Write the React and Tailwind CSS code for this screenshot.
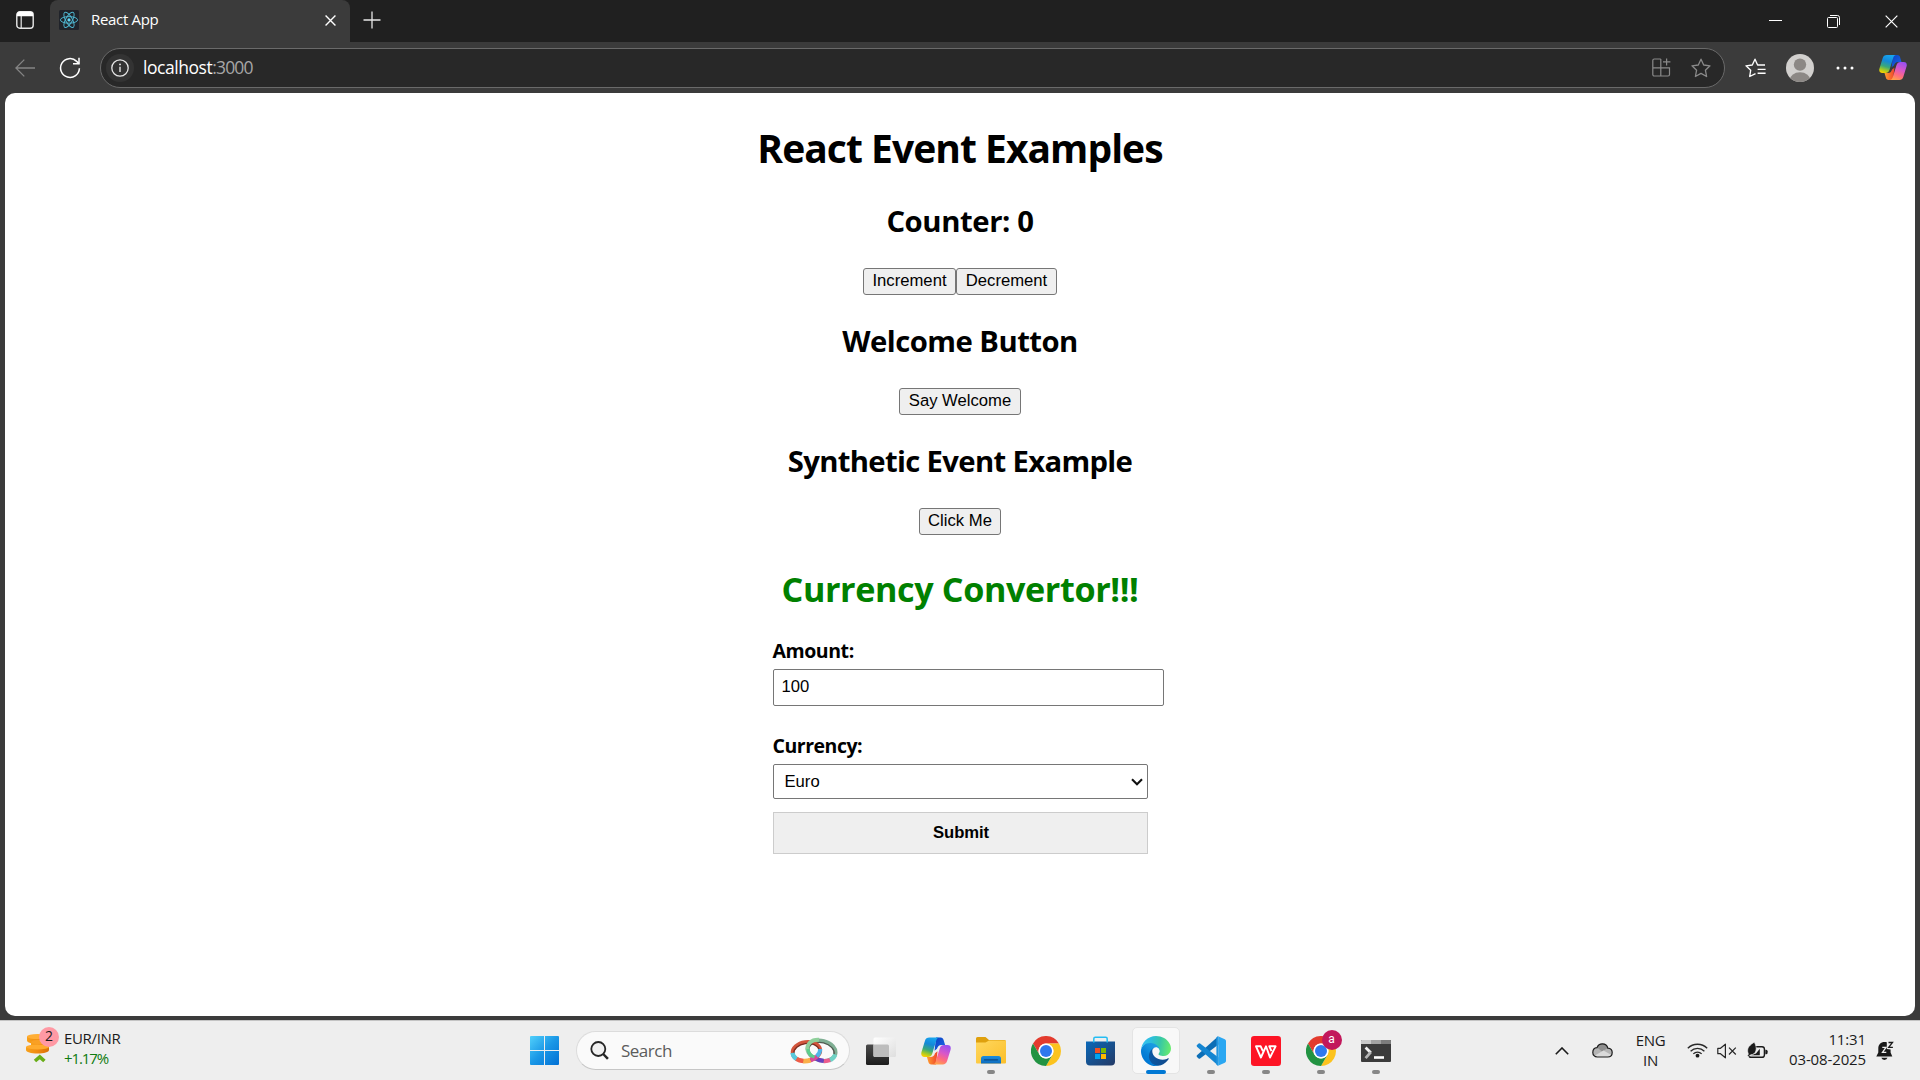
import React from "react";

/* ---------- browser chrome icons ---------- */

function TabActionsIcon() {
  return (
    <svg width="18" height="18" viewBox="0 0 18 18" fill="none">
      <rect x="0.8" y="0.8" width="16.4" height="16.4" rx="3" stroke="#e8e8e8" strokeWidth="1.4" />
      <path d="M1 5.2V3.6A2.8 2.8 0 0 1 3.8.8h10.4A2.8 2.8 0 0 1 17 3.6v1.6z" fill="#fff" />
      <path d="M5.2 5v12" stroke="#e8e8e8" strokeWidth="1.2" />
    </svg>
  );
}

function ReactLogo() {
  return (
    <svg width="20" height="20" viewBox="0 0 20 20" fill="none">
      <rect width="20" height="20" rx="1.5" fill="#20232a" />
      <g stroke="#4fb8d3" strokeWidth="0.95">
        <ellipse cx="10" cy="9.9" rx="8.6" ry="3.3" />
        <ellipse cx="10" cy="9.9" rx="8.6" ry="3.3" transform="rotate(60 10 9.9)" />
        <ellipse cx="10" cy="9.9" rx="8.6" ry="3.3" transform="rotate(120 10 9.9)" />
      </g>
      <circle cx="10" cy="9.9" r="1.6" fill="#61dafb" />
    </svg>
  );
}

function CloseIcon({ size, stroke }) {
  return (
    <svg width={size} height={size} viewBox="0 0 12 12" fill="none" stroke="#fff" strokeWidth={stroke}>
      <path d="M.6.6l10.8 10.8M11.4.6L.6 11.4" />
    </svg>
  );
}

function PlusIcon() {
  return (
    <svg width="18" height="18" viewBox="0 0 18 18" stroke="#e6e6e6" strokeWidth="1.3">
      <path d="M9 0.5v17M0.5 9h17" />
    </svg>
  );
}

function BackIcon() {
  return (
    <svg width="20" height="18" viewBox="0 0 20 18" fill="none" stroke="#858585" strokeWidth="1.3">
      <path d="M9.3.6L.9 9l8.4 8.4M1 9h19" />
    </svg>
  );
}

function ReloadIcon() {
  return (
    <svg width="22" height="22" viewBox="0 0 22 22" fill="none" stroke="#fff" strokeWidth="1.5">
      <path d="M20.4 11.2A9.4 9.4 0 1 1 17.7 4.4L20 6.6" />
      <path d="M20 .8v6h-6" />
    </svg>
  );
}

function InfoIcon() {
  return (
    <svg width="18" height="18" viewBox="0 0 18 18" fill="none">
      <circle cx="9" cy="9" r="8.2" stroke="#e6e6e6" strokeWidth="1.3" />
      <path d="M9 7.8v5.2" stroke="#e6e6e6" strokeWidth="1.4" />
      <circle cx="9" cy="5.4" r="0.95" fill="#e6e6e6" />
    </svg>
  );
}

function AppsAddIcon() {
  return (
    <svg width="19" height="19" viewBox="0 0 19 19" fill="none" stroke="#8a8a8a" strokeWidth="1.2">
      <path d="M8.8 1H2.3A1.5 1.5 0 0 0 .8 2.5V16.5A1.5 1.5 0 0 0 2.3 18H16A1.5 1.5 0 0 0 17.5 16.5V9.8H.8M8.8 1V18" />
      <path d="M14.6.4v7M11 3.9h7.4" />
    </svg>
  );
}

function StarIcon() {
  return (
    <svg width="20" height="20" viewBox="0 0 20 20" fill="none" stroke="#8a8a8a" strokeWidth="1.3" strokeLinejoin="round">
      <path d="M10 1.200l2.700 5.800 6.300.800-4.600 4.400 1.200 6.300L10 15.400 4.400 18.500l1.200-6.300L1 7.800l6.300-.800z" />
    </svg>
  );
}

function FavoritesIcon() {
  return (
    <svg width="21" height="20" viewBox="0 0 21 20" fill="none" stroke="#fff" strokeWidth="1.35" strokeLinejoin="round">
      <path d="M10.500 15.700L4.700 18.500l1-6.300L1 7.800l6.300-.800L10 1.200l2.600 5.800h7.400M12.600 11.300H20.600M12.600 15.200H20.600" />
    </svg>
  );
}

function Avatar() {
  return (
    <svg width="28" height="28" viewBox="0 0 28 28">
      <defs>
        <clipPath id="avatarClip"><circle cx="14" cy="14" r="14" /></clipPath>
      </defs>
      <g clipPath="url(#avatarClip)">
        <rect width="28" height="28" fill="#d2d0ce" />
        <circle cx="14" cy="10.600" r="6.200" fill="#8c8885" />
        <ellipse cx="14" cy="26.500" rx="10.500" ry="8.300" fill="#8c8885" />
      </g>
    </svg>
  );
}

function CopilotIcon({ id, width, height }) {
  return (
    <svg width={width} height={height} viewBox="0 0 30 28">
      <defs>
        <linearGradient id={id + "a"} x1="0.600" y1="0" x2="0.300" y2="1">
          <stop offset="0" stopColor="#17a5ee" />
          <stop offset="0.350" stopColor="#1488d8" />
          <stop offset="0.650" stopColor="#3aa87a" />
          <stop offset="0.850" stopColor="#a3c925" />
          <stop offset="1" stopColor="#f5d000" />
        </linearGradient>
        <linearGradient id={id + "b"} x1="0.700" y1="0" x2="0.300" y2="1">
          <stop offset="0" stopColor="#9a50f0" />
          <stop offset="0.400" stopColor="#d957c8" />
          <stop offset="0.700" stopColor="#ff6a80" />
          <stop offset="1" stopColor="#ffa24a" />
        </linearGradient>
        <linearGradient id={id + "c"} x1="0" y1="0" x2="1" y2="1">
          <stop offset="0" stopColor="#0c3fc2" />
          <stop offset="1" stopColor="#1b6be8" />
        </linearGradient>
        <linearGradient id={id + "d"} x1="0" y1="0" x2="1" y2="0">
          <stop offset="0" stopColor="#ffa02e" />
          <stop offset="1" stopColor="#f0442c" />
        </linearGradient>
      </defs>
      <path d="M15 .6h4.700c1.600 0 2.500 1 2.900 2.400l1.500 5h-3.600c-2.600 0-3.700 1.300-4.500 3.800l-2.500 2z" fill={"url(#" + id + "c)"} />
      <path d="M15 27.400h-4.700c-1.600 0-2.500-1-2.900-2.400L5.900 20h3.600c2.600 0 3.700-1.300 4.500-3.800l2.500-2z" fill={"url(#" + id + "d)"} />
      <path d="M8.300.6H18.500c-2 0-2.800 1.500-3.300 3.100l-4 13c-.7 2.200-2.100 3.200-4.200 3.200H3.500C.7 19.900-.3 17.800.5 15.100L3.900 4C4.600 1.600 6.100.6 8.300.6z" fill={"url(#" + id + "a)"} />
      <path d="M21.700 27.400H11.500c2 0 2.800-1.500 3.300-3.100l4-13c.7-2.200 2.100-3.200 4.200-3.200h3.500c2.800 0 3.800 2.100 3 4.800L26.100 24c-.7 2.400-2.200 3.400-4.400 3.400z" fill={"url(#" + id + "b)"} />
    </svg>
  );
}

/* ---------- taskbar icons ---------- */

function CoinsIcon() {
  return (
    <svg width="26" height="30" viewBox="0 0 26 30">
      <defs>
        <linearGradient id="coin" x1="0" y1="0" x2="1" y2="0">
          <stop offset="0" stopColor="#f7a11b" />
          <stop offset="0.500" stopColor="#f08a10" />
          <stop offset="1" stopColor="#d96f08" />
        </linearGradient>
      </defs>
      <g fill="url(#coin)">
        <path d="M1 3.500v4C1 9.800 6 11 12 11s10-1.200 10-3.500v-4z" />
        <path d="M5 9v3c0 2.300 4.500 3.500 9.500 3.500S24 14.300 24 12V9z" />
        <path d="M0 14v3c0 2.300 5 3.500 11.500 3.500S23 19.300 23 17v-3z" />
      </g>
      <ellipse cx="11.500" cy="14" rx="11.500" ry="2.600" fill="#ffab2e" />
      <ellipse cx="14.500" cy="9" rx="9.500" ry="2.300" fill="#f9a024" />
      <ellipse cx="11.500" cy="3.600" rx="10.500" ry="2.600" fill="#ffae35" />
      <path d="M9 28l4.800-4.200L18.400 28" fill="none" stroke="#69ad18" strokeWidth="3.600" />
    </svg>
  );
}

function WindowsIcon() {
  return (
    <svg width="29" height="29" viewBox="0 0 29 29">
      <defs>
        <linearGradient id="win" x1="0" y1="0" x2="29" y2="29" gradientUnits="userSpaceOnUse">
          <stop offset="0" stopColor="#51d0fb" />
          <stop offset="0.500" stopColor="#1a97e6" />
          <stop offset="1" stopColor="#0270d4" />
        </linearGradient>
      </defs>
      <path d="M1 0h13v14H0V1a1 1 0 0 1 1-1zM15 0h13a1 1 0 0 1 1 1v13H15zM0 15h14v14H1a1 1 0 0 1-1-1zM15 15h14v13a1 1 0 0 1-1 1H15z" fill="url(#win)" />
    </svg>
  );
}

function MagnifierIcon() {
  return (
    <svg width="19" height="19" viewBox="0 0 19 19" fill="none" stroke="#262626">
      <circle cx="8.300" cy="8" r="7" fill="#f1f1f1" strokeWidth="1.800" />
      <path d="M13.200 13l4.700 4.800" strokeWidth="2.500" />
    </svg>
  );
}

function RingsIcon() {
  return (
    <svg width="48" height="28" viewBox="0 0 48 28" fill="none">
      <g transform="rotate(14 31 14)">
        <ellipse cx="31.500" cy="13.500" rx="14.200" ry="9.800" stroke="#7fae93" strokeWidth="3.800" />
        <ellipse cx="31.500" cy="14.300" rx="13" ry="8.800" stroke="#4f5a50" strokeWidth="1.300" />
        <path d="M45.700 14c-.3 3-1.700 5.300-4.200 7" stroke="#6fd3c6" strokeWidth="4.200" />
        <path d="M42 20.600c-1.800 1.300-3.800 2.100-6 2.500" stroke="#ec5c8c" strokeWidth="4.200" />
        <path d="M36 23c-3 .5-6 .2-8.500-.5" stroke="#6a3fc0" strokeWidth="4.200" />
      </g>
      <g transform="rotate(-8 16 15)">
        <ellipse cx="16.500" cy="14.500" rx="14" ry="9.500" stroke="#d2553c" strokeWidth="3.600" />
        <ellipse cx="16.500" cy="15" rx="12.700" ry="8.400" stroke="#7c2c20" strokeWidth="1.300" />
        <path d="M2.500 14c0 3 1.200 5.300 3.700 7" stroke="#59c9dc" strokeWidth="4.200" />
        <path d="M5.600 20.500c1.800 1.500 4 2.500 6.600 3.100" stroke="#ef5c46" strokeWidth="4.600" />
        <path d="M12 23.600c2.400.5 5 .5 7.500.1" stroke="#fbb04a" strokeWidth="4.800" />
        <path d="M19.400 23.700c2.500-.5 4.800-1.500 6.700-3" stroke="#d64a9b" strokeWidth="4.600" />
        <path d="M26 20.700c2.500-1.800 4.200-4 4.500-6.700" stroke="#4fb4e8" strokeWidth="4" />
      </g>
      <path d="M17.800 14C16 7 21.500 2.400 29 2.800" stroke="#8fd09b" strokeWidth="4" />
      <path d="M17.900 12c.4 4 3 6.800 6.600 8.200" stroke="#5bcf8c" strokeWidth="3" />
    </svg>
  );
}

function TaskViewIcon() {
  return (
    <svg width="30" height="28" viewBox="0 0 30 28">
      <defs>
        <linearGradient id="tvDark" x1="0" y1="0" x2="0" y2="1">
          <stop offset="0" stopColor="#4a4a4a" />
          <stop offset="1" stopColor="#1d1d1d" />
        </linearGradient>
        <linearGradient id="tvLight" x1="0" y1="0" x2="1" y2="1">
          <stop offset="0" stopColor="#ffffff" />
          <stop offset="1" stopColor="#dedede" />
        </linearGradient>
      </defs>
      <rect x="0" y="7.500" width="23" height="20.500" rx="1.500" fill="url(#tvDark)" />
      <rect x="7.500" y="0.500" width="22.500" height="19.500" rx="1.500" fill="url(#tvLight)" />
      <path d="M7.500 7.500H21.500A1.500 1.500 0 0 1 23 9V20H9A1.500 1.500 0 0 1 7.500 18.500z" fill="#bdbdbd" />
    </svg>
  );
}

function FolderIcon() {
  return (
    <svg width="30" height="27" viewBox="0 0 30 27">
      <defs>
        <linearGradient id="folder" x1="0" y1="0" x2="1" y2="1">
          <stop offset="0" stopColor="#ffd75e" />
          <stop offset="1" stopColor="#fbbf2a" />
        </linearGradient>
        <linearGradient id="folderBlue" x1="0" y1="0" x2="0" y2="1">
          <stop offset="0" stopColor="#1a8ee0" />
          <stop offset="1" stopColor="#0f6cbd" />
        </linearGradient>
      </defs>
      <path d="M0 1.500A1.500 1.500 0 0 1 1.500 0H9.500L13 3H28.500A1.500 1.500 0 0 1 30 4.500V10H0z" fill="#dfa00d" />
      <path d="M0 5.500H9.500L13 3.500H29A1 1 0 0 1 30 4.500V25.500A1 1 0 0 1 29 26.500H1A1 1 0 0 1 0 25.500z" fill="url(#folder)" />
      <path d="M5 26.500V21.500A2.500 2.500 0 0 1 7.500 19H22.500A2.500 2.500 0 0 1 25 21.500V26.500z" fill="url(#folderBlue)" />
      <path d="M8.500 22.800h13" stroke="#0b4a86" strokeWidth="1.200" strokeLinecap="round" />
    </svg>
  );
}

function ChromeIcon() {
  return (
    <svg width="30" height="30" viewBox="0 0 48 48">
      <path d="M24 12H44.780A24 24 0 0 0 3.200 12L13.600 30A12 12 0 0 1 24 12z" fill="#e33b2e" />
      <path d="M34.390 30L24 48A24 24 0 0 0 44.780 12H24A12 12 0 0 1 34.390 30z" fill="#fcc31e" />
      <path d="M13.610 30L3.200 12A24 24 0 0 0 24 48L34.390 30A12 12 0 0 1 13.610 30z" fill="#229342" />
      <circle cx="24" cy="24" r="12" fill="#fff" />
      <circle cx="24" cy="24" r="9.600" fill="#2f78ee" />
    </svg>
  );
}

function StoreIcon() {
  return (
    <svg width="30" height="30" viewBox="0 0 30 30">
      <defs>
        <linearGradient id="store" x1="0" y1="0" x2="1" y2="1">
          <stop offset="0" stopColor="#0a68b8" />
          <stop offset="1" stopColor="#243a66" />
        </linearGradient>
      </defs>
      <path d="M0 5.500H29V25.500A4 4 0 0 1 25 29.500H4A4 4 0 0 1 0 25.500z" fill="url(#store)" />
      <path d="M7.800 6.500V2.800A1.500 1.500 0 0 1 9.300 1.300H19.700A1.500 1.500 0 0 1 21.200 2.800V6.500" fill="none" stroke="#25bdf3" strokeWidth="1.500" />
      <rect x="9" y="12" width="5" height="5" fill="#f25022" />
      <rect x="15" y="12" width="5" height="5" fill="#7fba00" />
      <rect x="9" y="18" width="5" height="5" fill="#00a4ef" />
      <rect x="15" y="18" width="5" height="5" fill="#ffb900" />
    </svg>
  );
}

function EdgeIcon() {
  return (
    <svg width="30" height="30" viewBox="0 0 256 256">
      <defs>
        <linearGradient id="edgeA" x1="63" y1="177" x2="241" y2="177" gradientUnits="userSpaceOnUse">
          <stop offset="0" stopColor="#0c59a4" />
          <stop offset="1" stopColor="#114a8b" />
        </linearGradient>
        <linearGradient id="edgeB" x1="157" y1="100" x2="46" y2="221" gradientUnits="userSpaceOnUse">
          <stop offset="0" stopColor="#1b9de2" />
          <stop offset="0.300" stopColor="#1595df" />
          <stop offset="0.700" stopColor="#0680d7" />
          <stop offset="1" stopColor="#0078d4" />
        </linearGradient>
        <linearGradient id="edgeC" x1="10" y1="70" x2="250" y2="110" gradientUnits="userSpaceOnUse">
          <stop offset="0" stopColor="#35c1f1" />
          <stop offset="0.300" stopColor="#2dbfdc" />
          <stop offset="0.600" stopColor="#36c6a8" />
          <stop offset="1" stopColor="#66eb6e" />
        </linearGradient>
      </defs>
      <path fill="url(#edgeA)" d="M231 190.500c-3.400 1.800-6.900 3.400-10.500 4.700-11.500 4.300-23.600 6.500-35.900 6.500-47.300 0-88.500-32.500-88.500-74.300.1-11.400 6.400-21.900 16.400-27.300-42.800 1.800-53.800 46.400-53.800 72.500 0 73.900 68.100 81.400 82.800 81.400 7.900 0 19.800-2.300 27-4.600l1.300-.4c27.600-9.500 51-28.100 66.600-52.800 1.200-1.900.6-4.300-1.200-5.500-1.300-.8-2.900-.9-4.200-.2z" />
      <path fill="url(#edgeB)" d="M105.700 241.400c-8.900-5.500-16.600-12.800-22.700-21.300-26.300-36-18.400-86.500 17.600-112.800 3.800-2.700 7.700-5.200 11.900-7.200 3.100-1.500 8.400-4.100 15.500-4 10.100.1 19.600 4.900 25.700 13 4 5.400 6.300 11.900 6.400 18.700 0-.2 24.500-79.600-80-79.600-43.900 0-80 41.700-80 78.200-.2 19.300 4 38.500 12.100 56 27.600 58.800 94.800 87.600 156.400 67.100-21.100 6.600-44.100 3.700-62.900-8.100z" />
      <path fill="url(#edgeC)" d="M152.300 148.900c-.9 1-3.400 2.500-3.400 5.600 0 2.600 1.700 5.200 4.800 7.300 14.300 10 41.400 8.600 41.500 8.600 10.700 0 21.100-2.900 30.300-8.300 18.800-11 30.400-31.100 30.400-52.900.3-22.400-8-37.300-11.300-43.900C223.500 23.900 177.700 0 128 0 58 0 1 56.200 0 126.200c.5-36.500 36.800-66 80-66 3.500 0 23.500.3 42 10.100 16.300 8.600 24.900 18.900 30.800 29.200 6.200 10.700 7.300 24.100 7.300 29.500 0 5.300-2.700 13.300-7.800 19.900z" />
    </svg>
  );
}

function VsCodeIcon() {
  return (
    <svg width="30" height="30" viewBox="0 0 30 30">
      <path d="M22 0.500L1 19.300a1.100 1.100 0 0 0 0 1.600l1.600 1.500a1.200 1.200 0 0 0 1.500.1L22.500 8.600z" fill="#0c6eb6" />
      <path d="M22 29.500L1 10.700a1.100 1.100 0 0 1 0-1.600l1.600-1.500a1.200 1.200 0 0 1 1.500-.1L22.500 21.400z" fill="#1485d1" />
      <path d="M22 .3L28.800 3.300A2 2 0 0 1 30 5.100V24.900A2 2 0 0 1 28.800 26.700L22 29.700C22.600 29 22.500 28 22.500 27.500V2.500C22.500 1.500 22.500.8 22 .3z" fill="#2aa7f2" />
      <path d="M22 .3c.5.500.5 1.200.5 2.200V27.500c0 .500.1 1.500-.5 2.200l-1.600-1V1.200z" fill="#2196e0" />
    </svg>
  );
}

function WpsIcon() {
  return (
    <svg width="30" height="30" viewBox="0 0 30 30" fill="none">
      <rect width="30" height="30" rx="3.200" fill="#fd1425" />
      <path d="M11.900 15.200L9.700 10.300H5L9.900 21.500 15 10.300 19 21.500 24.600 10.300H18.300L20.500 15.200" stroke="#fff" strokeWidth="1.900" strokeLinejoin="round" />
    </svg>
  );
}

function TerminalIcon() {
  return (
    <svg width="30" height="22" viewBox="0 0 30 22" fill="none">
      <rect width="30" height="22" rx="1" fill="#3b3b3b" />
      <path d="M1 0H10V4H0V1A1 1 0 0 1 1 0z" fill="#c9c9c9" />
      <path d="M10 0H20V4H10z" fill="#a2a2a2" />
      <path d="M20 0H29A1 1 0 0 1 30 1V4H20z" fill="#7d7d7d" />
      <path d="M4.600 7.500L9.800 12.800" stroke="#f2f2f2" strokeWidth="2.800" />
      <path d="M9.800 12.200L4.600 18.200" stroke="#b5b5b5" strokeWidth="2.800" />
      <path d="M13 17.500H23" stroke="#fff" strokeWidth="2.600" />
    </svg>
  );
}

function CloudIcon() {
  return (
    <svg width="21" height="15" viewBox="0 0 21 15">
      <path d="M5 4.600C6 2 8 .8 10.300.8c3 0 5 1.700 5.500 4.300 2.700.2 4.400 1.900 4.400 4.400 0 2.600-1.900 4.500-4.500 4.500H5.200C2.600 14 .8 12 .8 9.400.8 6.800 2.500 4.800 5 4.600z" fill="#b4b4b4" />
      <path d="M5 4.600C6 2 8 .8 10.300.8c3 0 5 1.700 5.500 4.300L10 8.500z" fill="#8f8f8f" />
      <path d="M2.500 12.800L11.500 7.500l8 4.500c-1 1.400-2.200 2-3.800 2H5.200c-1 0-2-.5-2.700-1.200z" fill="#dadada" />
      <path d="M5 4.600C6 2 8 .8 10.300.8c3 0 5 1.700 5.500 4.300 2.700.2 4.400 1.900 4.400 4.400 0 2.600-1.900 4.500-4.500 4.500H5.200C2.600 14 .8 12 .8 9.400.8 6.800 2.500 4.800 5 4.600z" fill="none" stroke="#1c1c1c" strokeWidth="1.200" />
    </svg>
  );
}

function WifiIcon() {
  return (
    <svg width="21" height="15" viewBox="0 0 21 15" fill="none" stroke="#2a2a2a" strokeWidth="1.300">
      <path d="M.8 5.300A13.700 13.700 0 0 1 20.200 5.300M3.600 8.200A9.800 9.800 0 0 1 17.400 8.200M6.300 10.900A6 6 0 0 1 14.700 10.900" />
      <circle cx="10.500" cy="12.700" r="1.900" fill="#1c1c1c" stroke="none" />
    </svg>
  );
}

function MutedIcon() {
  return (
    <svg width="20" height="16" viewBox="0 0 20 16" fill="none" stroke="#262626" strokeWidth="1.200">
      <path d="M.8 5.300H3.500L8.400 1.200V14.800L3.500 10.700H.8z" strokeLinejoin="round" />
      <path d="M12 4.700l6.800 6.800M18.800 4.700L12 11.500" />
    </svg>
  );
}

function BatterySaverIcon() {
  return (
    <svg width="21" height="17" viewBox="0 0 21 17">
      <rect x="1.800" y="4.700" width="15.600" height="10.600" rx="2.400" fill="#eee" stroke="#1b1b1b" strokeWidth="1.400" />
      <path d="M18.300 7.800h.8a1.500 1.500 0 0 1 1.500 1.500v1.400a1.500 1.500 0 0 1-1.500 1.500h-.8z" fill="#1b1b1b" />
      <path d="M4 13.200H12.800V6.800L9 11.500z" fill="#1b1b1b" />
      <path d="M7.300.2C8.900 3.300 9.800 6 8.800 9c-.7 2.200-2.600 3.700-4.800 3.700L1.200 14.500.4 13.500l1.300-1.300C-.6 8.500.5 4 7.300.2z" fill="#1b1b1b" stroke="#eee" strokeWidth="0.600" />
    </svg>
  );
}

function BellSnoozeIcon() {
  return (
    <svg width="18" height="20" viewBox="0 0 18 20" fill="none">
      <path d="M8.500 1C4.800 1 2.300 3.700 2.300 7.200V11.500L.3 15.600H16.300L14.600 11.500V8.500L10.800 8V1.300C10 1.100 9.200 1 8.500 1z" fill="#191919" />
      <path d="M5.300 16.800H11.500A3.200 2.800 0 0 1 5.300 16.800z" fill="#191919" />
      <path d="M6.300 6.300H10L6.500 11.300H10.300" stroke="#eee" strokeWidth="1.300" />
      <path d="M12.500 1.500H16.500L12.700 6.300H16.900" stroke="#191919" strokeWidth="1.300" />
    </svg>
  );
}

/* ---------- layout pieces ---------- */

function TabStrip() {
  return (
    <div className="flex h-[42px] bg-[#202020]">
      <div className="flex w-[50px] items-center justify-center pb-0.5">
        <TabActionsIcon />
      </div>
      <div className="flex h-[42px] w-[300px] items-center rounded-t-[8px] bg-[#3b3b3b] pr-3.5 pb-0.5 pl-[9px]">
        <ReactLogo />
        <span className="ml-3 flex-1 pb-0.5 text-[15px] leading-5 tracking-[-0.32px] text-white">React App</span>
        <CloseIcon size={11} stroke={1.5} />
      </div>
      <div className="flex w-11 items-center justify-center pb-[3px]">
        <PlusIcon />
      </div>
      <div className="flex flex-1 items-center justify-end gap-[45px] pr-[22px]">
        <svg width="13" height="13" viewBox="0 0 13 13"><path d="M0 5.500h13" stroke="#fff" /></svg>
        <svg width="13" height="13" viewBox="0 0 13 13" fill="none" stroke="#fff">
          <rect x="0.500" y="2.500" width="10" height="10" rx="1" />
          <path d="M3 .5H10.500A2 2 0 0 1 12.500 2.500V10" />
        </svg>
        <CloseIcon size={13} stroke={1.1} />
      </div>
    </div>
  );
}

function Toolbar() {
  return (
    <div className="flex h-[51px] items-center bg-[#3b3b3b] pl-[15px]">
      <BackIcon />
      <div className="ml-6 flex"><ReloadIcon /></div>
      <div className="ml-[19px] flex h-10 w-[1625px] items-center rounded-full border border-[#6a6a6a] bg-[#282828] pr-[13px] pl-[5px]">
        <div className="flex size-7 items-center justify-center rounded-full bg-[#333333]">
          <InfoIcon />
        </div>
        <span className="ml-[9px] pb-0.5 text-[17.5px] leading-6 tracking-[-0.45px] text-white">
          localhost<span className="tracking-[-0.85px] text-[#a6a6a6]">:3000</span>
        </span>
        <div className="ml-auto flex items-center gap-5">
          <AppsAddIcon />
          <StarIcon />
        </div>
      </div>
      <div className="ml-5 flex"><FavoritesIcon /></div>
      <div className="ml-5 flex"><Avatar /></div>
      <svg className="ml-[22px]" width="18" height="4" viewBox="0 0 18 4" fill="#fff">
        <circle cx="2" cy="2" r="1.500" />
        <circle cx="9" cy="2" r="1.500" />
        <circle cx="16" cy="2" r="1.500" />
      </svg>
      <div className="ml-[25px] flex"><CopilotIcon id="bar" width={28} height={27} /></div>
    </div>
  );
}

function PlainButton({ children, className }) {
  return (
    <button
      className={
        "h-[27px] rounded-[3px] border border-[#767676] bg-[#efefef] pb-px text-center font-['Liberation_Sans',sans-serif] text-[16.67px] leading-[22px] text-black " +
        className
      }
    >
      {children}
    </button>
  );
}

function Heading({ children, className }) {
  return <h2 className={"text-[29.25px] leading-[41px] font-bold " + className}>{children}</h2>;
}

function Page() {
  return (
    <main className="mx-[5px] flex h-[923px] flex-col items-center rounded-[10px] bg-white pt-7 text-black">
      <h1 className="text-[39px] leading-[53px] font-bold tracking-[-0.96px]">React Event Examples</h1>
      <Heading className="mt-[27px] tracking-[-0.39px]">Counter: 0</Heading>
      <div className="mt-[26px] flex">
        <PlainButton className="w-[93px]">Increment</PlainButton>
        <PlainButton className="w-[101px]">Decrement</PlainButton>
      </div>
      <Heading className="mt-[26px] tracking-[-0.52px]">Welcome Button</Heading>
      <PlainButton className="mt-[26px] w-[122px]">Say Welcome</PlainButton>
      <Heading className="mt-[26px] tracking-[-0.66px]">Synthetic Event Example</Heading>
      <PlainButton className="mt-[26px] w-[82px]">Click Me</PlainButton>
      <h1 className="mt-[30px] text-[34.2px] leading-[47px] font-bold tracking-[-0.4px] text-[#008000]">
        Currency Convertor!!!
      </h1>
      <form className="mt-[26px] flex w-[375px] flex-col" onSubmit={(e) => e.preventDefault()}>
        <label className="text-[19.5px] leading-[26px] font-bold tracking-[-0.44px]">Amount:</label>
        <input
          className="mt-[5px] h-[37px] w-[391px] rounded-[2px] border border-[#767676] bg-white px-2 pb-px font-['Liberation_Sans',sans-serif] text-[16.67px] text-black"
          defaultValue="100"
        />
        <label className="mt-[27px] text-[19.5px] leading-[26px] font-bold tracking-[-0.48px]">Currency:</label>
        <div className="mt-[5px] flex h-[35px] items-center justify-between rounded-[2px] border border-[#767676] bg-white pr-1 pl-[11px] font-['Liberation_Sans',sans-serif] text-[16.67px]">
          <span>Euro</span>
          <svg width="12" height="8" viewBox="0 0 12 8" fill="none" stroke="#111" strokeWidth="2.100">
            <path d="M1 1.200l5 5 5-5" />
          </svg>
        </div>
        <button className="mt-[13px] h-[42px] border border-[#cccccc] bg-[#efefef] pb-0.5 pl-0.5 font-['Liberation_Sans',sans-serif] text-[16.67px] font-bold tracking-[-0.1px]">
          Submit
        </button>
      </form>
    </main>
  );
}

function TaskItem({ children, running, active }) {
  return (
    <div className="relative flex h-full w-[55px] items-center justify-center">
      {active && <div className="absolute inset-x-[3.5px] top-1.5 bottom-1.5 rounded-[5px] border border-[#e4e4e4] bg-[#f8f8f8]" />}
      <div className="relative flex">{children}</div>
      {running && <div className="absolute bottom-1.5 h-1 w-2 rounded-full bg-[#868686]" />}
      {active && <div className="absolute bottom-1.5 h-1 w-5 rounded-full bg-[#0078d4]" />}
    </div>
  );
}

function Taskbar() {
  return (
    <footer className="flex h-[60px] items-center border-t border-[#c4c4c4] bg-[#eeeeee] text-[15px] leading-5 text-[#1b1b1b]">
      <div className="flex w-[504px] pl-[26px]">
        <div className="relative mt-[3px] flex">
          <CoinsIcon />
          <div className="absolute -top-[6px] left-[13px] flex size-5 items-center justify-center rounded-full bg-[#ff99a4] pb-px text-sm leading-none">2</div>
        </div>
        <div className="ml-3 pb-1">
          <p className="-mt-0.5 tracking-[-0.33px]">EUR/INR</p>
          <p className="tracking-[-1.1px] text-[#0f7b0f]">+1.17%</p>
        </div>
      </div>
      <div className="ml-[26px] flex"><WindowsIcon /></div>
      <div className="ml-[17px] flex h-[39px] w-[274px] items-center rounded-full border border-[#dcdcdc] border-b-[#c6c6c6] bg-[#fafafa] pr-[11px] pl-[13px]">
        <MagnifierIcon />
        <span className="ml-3 flex-1 text-[17px] leading-6 tracking-[-0.5px] text-[#5c5c5c]">Search</span>
        <RingsIcon />
      </div>
      <div className="ml-[3px] flex h-[59px]">
        <TaskItem><TaskViewIcon /></TaskItem>
        <TaskItem><CopilotIcon id="task" width={30} height={28} /></TaskItem>
        <TaskItem running><FolderIcon /></TaskItem>
        <TaskItem><ChromeIcon /></TaskItem>
        <TaskItem><StoreIcon /></TaskItem>
        <TaskItem active><EdgeIcon /></TaskItem>
        <TaskItem running><VsCodeIcon /></TaskItem>
        <TaskItem running><WpsIcon /></TaskItem>
        <TaskItem running>
          <ChromeIcon />
          <div className="absolute -top-1.5 left-4 flex size-5 items-center justify-center rounded-full bg-[#c2185b] pb-0.5 font-['Roboto',sans-serif] text-[12px] leading-none text-white">a</div>
        </TaskItem>
        <TaskItem running><TerminalIcon /></TaskItem>
      </div>
      <div className="ml-auto flex items-center pr-[26px]">
        <svg width="14" height="8" viewBox="0 0 14 8" fill="none" stroke="#1b1b1b" strokeWidth="1.600">
          <path d="M.8 7.200L7 1l6.200 6.200" />
        </svg>
        <div className="ml-[23px] flex"><CloudIcon /></div>
        <div className="ml-[22px] w-[31px] pb-0.5 text-center tracking-[-0.3px]">
          <p>ENG</p>
          <p>IN</p>
        </div>
        <div className="ml-[21px] flex"><WifiIcon /></div>
        <div className="ml-[9px] flex"><MutedIcon /></div>
        <div className="ml-[10px] flex"><BatterySaverIcon /></div>
        <div className="ml-[19px] w-[79px] pb-1 text-right tracking-[-0.13px]">
          <p>11:31</p>
          <p>03-08-2025</p>
        </div>
        <div className="ml-[10px] flex"><BellSnoozeIcon /></div>
      </div>
    </footer>
  );
}

export default function App() {
  return (
    <div className="flex h-[1080px] w-[1920px] flex-col overflow-hidden bg-[#3b3b3b] font-['Open_Sans','Noto_Sans',sans-serif]">
      <TabStrip />
      <Toolbar />
      <Page />
      <div className="mt-auto">
        <Taskbar />
      </div>
    </div>
  );
}
